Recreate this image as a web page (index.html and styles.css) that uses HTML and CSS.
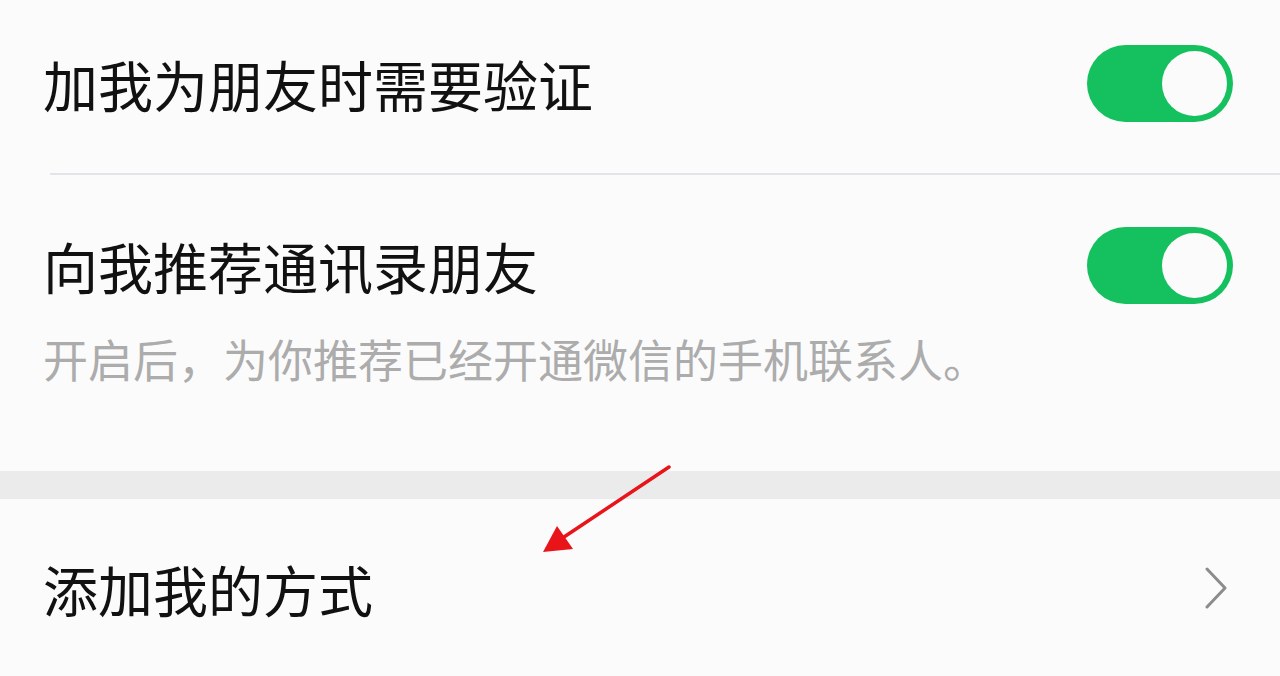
FILE: index.html
```html
<!DOCTYPE html>
<html>
<head>
    <title>朋友权限</title>
    <link rel="stylesheet" href="styles.css">
</head>
<body>
    <div class="group">
        <div class="row first">
            <span class="title">加我为朋友时需要验证</span>
            <div class="toggle"><div class="knob"></div></div>
        </div>
        <div class="divider"></div>
        <div class="row second">
            <span class="title">向我推荐通讯录朋友</span>
            <div class="toggle"><div class="knob"></div></div>
        </div>
        <p class="hint">开启后，为你推荐已经开通微信的手机联系人。</p>
    </div>

    <div class="gap"></div>

    <div class="group">
        <div class="row link">
            <span class="title">添加我的方式</span>
            <svg class="chevron" width="24" height="42" viewBox="0 0 24 42">
                <polyline points="3,2 21,21 3,40" fill="none" stroke="#8c8c8c" stroke-width="3" stroke-linecap="round" stroke-linejoin="round"/>
            </svg>
        </div>
    </div>

    <svg class="annotation" width="1280" height="676" viewBox="0 0 1280 676">
        <line x1="669" y1="467" x2="558" y2="541" stroke="#e8141a" stroke-width="3.5" stroke-linecap="round"/>
        <polygon points="543,552 557,526 573,549" fill="#e8141a"/>
    </svg>
</body>
</html>
```

FILE: styles.css
```css
body {
    margin: 0;
    width: 1280px;
    height: 676px;
    overflow: hidden;
    position: relative;
    background-color: #fbfbfb;
    font-family: "Noto Sans CJK SC", "Noto Sans", sans-serif;
    color: #111;
}
.group {
    background-color: #fbfbfb;
}
.row {
    display: flex;
    align-items: center;
    justify-content: space-between;
    padding-left: 43px;
    padding-right: 47px;
}
.row.first {
    height: 77px;
    padding-top: 45px;
    padding-bottom: 51px;
}
.row.second {
    height: 77px;
    padding-top: 52px;
}
.row.link {
    height: 178px;
    padding-right: 52px;
}
.title {
    font-size: 55px;
    line-height: 77px;
}
.divider {
    margin-left: 50px;
    height: 2px;
    background-color: #e4e4e8;
}
.hint {
    margin: 25px 0 0;
    padding: 0 0 82px 43px;
    font-size: 45px;
    line-height: 60px;
    color: #acacac;
}
.gap {
    height: 28px;
    background-color: #ebebeb;
}
.toggle {
    width: 146px;
    height: 77px;
    box-sizing: border-box;
    padding: 6px;
    border-radius: 39px;
    background-color: #15c05e;
    display: flex;
    justify-content: flex-end;
    align-items: center;
}
.knob {
    width: 65px;
    height: 65px;
    border-radius: 50%;
    background-color: #fbfbfb;
}
.chevron {
    display: block;
}
.annotation {
    position: absolute;
    left: 0;
    top: 0;
    pointer-events: none;
}
```
